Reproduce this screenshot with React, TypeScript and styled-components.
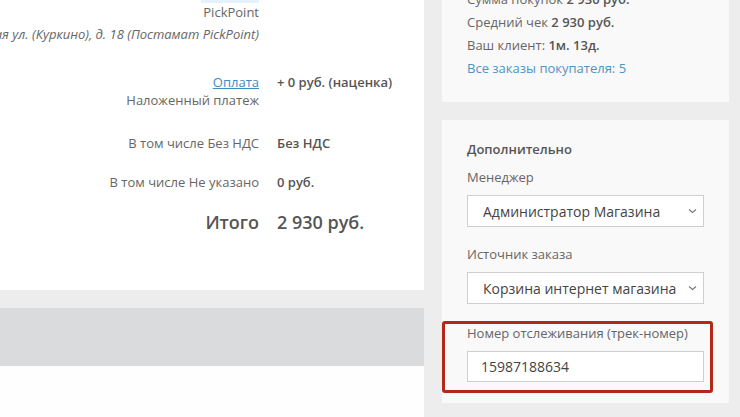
import React from "react";
import styled, { createGlobalStyle } from "styled-components";

const Global = createGlobalStyle`
  html, body { margin: 0; padding: 0; }
  body {
    width: 740px;
    height: 417px;
    overflow: hidden;
    background: #ededed;
    font-family: "Open Sans", "Noto Sans", sans-serif;
    font-size: 13px;
    color: #666;
  }
`;

const Page = styled.div`
  display: flex;
  width: 740px;
  height: 457px;
  margin-top: -40px;
`;

const LeftColumn = styled.div`
  width: 424px;
  display: flex;
  flex-direction: column;
  overflow: hidden;
`;

const OrderPanel = styled.div`
  background: #fff;
  padding: 19px 0 56px;
  display: flex;
  flex-direction: column;
`;

const Row = styled.div<{ $gap?: number }>`
  display: grid;
  grid-template-columns: 259px 1fr;
  column-gap: 18px;
  align-items: start;
  margin-top: ${(p) => p.$gap ?? 0}px;
  line-height: 18px;
`;

const LabelCell = styled.div`
  display: flex;
  flex-direction: column;
  align-items: flex-end;
  white-space: nowrap;
  min-width: 0;
`;

const Label = styled.span<{ $big?: boolean }>`
  color: ${(p) => (p.$big ? "#555" : "#666")};
  font-size: ${(p) => (p.$big ? "18px" : "13px")};
  font-weight: ${(p) => (p.$big ? 600 : 400)};
  line-height: ${(p) => (p.$big ? "24px" : "18px")};
`;

const Address = styled.span`
  margin-top: 4px;
  font-style: italic;
  color: #666;
`;

const LinkLabel = styled.a<{ $hl?: boolean }>`
  color: #3d8bc4;
  text-decoration: underline;
  background: ${(p) => (p.$hl ? "#e4f2fb" : "transparent")};
  padding-bottom: ${(p) => (p.$hl ? 6 : 0)}px;
  line-height: 18px;
`;

const Value = styled.span<{ $big?: boolean }>`
  color: #555;
  font-weight: 600;
  font-size: ${(p) => (p.$big ? "18px" : "13px")};
  line-height: ${(p) => (p.$big ? "24px" : "18px")};
  white-space: nowrap;
`;

const Spacer = styled.div`
  height: 18px;
  background: #ededed;
`;

const Band = styled.div`
  height: 58px;
  background: #dadbdd;
`;

const Blank = styled.div`
  flex: 1;
  background: #fefefe;
`;

const RightColumn = styled.div`
  flex: 1;
  background: #ededed;
  padding: 0 11px 0 18px;
  display: flex;
  flex-direction: column;
  gap: 18px;
`;

const Card = styled.div`
  background: #f9f9f9;
  padding: 28px 25px 22px;
  display: flex;
  flex-direction: column;
`;

const CardLine = styled.div`
  line-height: 23px;
  color: #666;
  b { color: #555; font-weight: 600; }
`;

const BlueLink = styled.a`
  line-height: 23px;
  color: #4b95c9;
  text-decoration: none;
`;

const ExtraCard = styled(Card)`
  padding: 18px 25px 21px;
`;

const Heading = styled.div`
  font-weight: 600;
  color: #555;
  line-height: 23px;
`;

const FieldLabel = styled.div<{ $top: number }>`
  margin-top: ${(p) => p.$top}px;
  line-height: 23px;
  color: #666;
`;

const SelectBox = styled.div`
  margin-top: 6px;
  height: 30px;
  border: 1px solid #cfcfcf;
  background: #fff;
  display: flex;
  align-items: center;
  padding: 0 6px 0 15px;
  font-size: 14px;
  color: #444;
  white-space: nowrap;
  overflow: hidden;
`;

const SelectText = styled.span`
  flex: 1;
  overflow: hidden;
`;

const Group = styled.div`
  position: relative;
  margin-top: 18px;
`;

const Highlight = styled.div`
  position: absolute;
  left: -25px;
  right: -9px;
  top: -1px;
  bottom: -11px;
  border: 3px solid #b5261b;
  border-radius: 3px;
  pointer-events: none;
`;

const TextInput = styled.div`
  margin-top: 6px;
  height: 29px;
  border: 1px solid #cfcfcf;
  background: #fff;
  display: flex;
  align-items: center;
  padding: 0 13px;
  font-size: 14px;
  color: #444;
`;

const Chevron = () => (
  <svg width="9" height="6" viewBox="0 0 9 6" fill="none">
    <polyline points="1,1.5 4.5,4.5 8,1.5" stroke="#777" strokeWidth="1.1" />
  </svg>
);

export default function App() {
  return (
    <>
      <Global />
      <Page>
        <LeftColumn>
          <OrderPanel>
            <Row>
              <LabelCell>
                <LinkLabel $hl>Доставка</LinkLabel>
                <Label>PickPoint</Label>
                <Address>г. Москва, Родионовская ул. (Куркино), д. 18 (Постамат PickPoint)</Address>
              </LabelCell>
              <Value>+ 0 руб. (доставка)</Value>
            </Row>
            <Row $gap={30}>
              <LabelCell>
                <LinkLabel>Оплата</LinkLabel>
                <Label>Наложенный платеж</Label>
              </LabelCell>
              <Value>+ 0 руб. (наценка)</Value>
            </Row>
            <Row $gap={25}>
              <LabelCell>
                <Label>В том числе Без НДС</Label>
              </LabelCell>
              <Value>Без НДС</Value>
            </Row>
            <Row $gap={21}>
              <LabelCell>
                <Label>В том числе Не указано</Label>
              </LabelCell>
              <Value>0 руб.</Value>
            </Row>
            <Row $gap={19}>
              <LabelCell>
                <Label $big>Итого</Label>
              </LabelCell>
              <Value $big>2 930 руб.</Value>
            </Row>
          </OrderPanel>
          <Spacer />
          <Band />
          <Blank />
        </LeftColumn>
        <RightColumn>
          <Card>
            <CardLine>
              Сумма покупок <b>2 930 руб.</b>
            </CardLine>
            <CardLine>
              Средний чек <b>2 930 руб.</b>
            </CardLine>
            <CardLine>
              Ваш клиент: <b>1м. 13д.</b>
            </CardLine>
            <BlueLink>Все заказы покупателя: 5</BlueLink>
          </Card>
          <ExtraCard>
            <Heading>Дополнительно</Heading>
            <FieldLabel $top={5}>Менеджер</FieldLabel>
            <SelectBox>
              <SelectText>Администратор Магазина</SelectText>
              <Chevron />
            </SelectBox>
            <FieldLabel $top={16}>Источник заказа</FieldLabel>
            <SelectBox>
              <SelectText>Корзина интернет магазина</SelectText>
              <Chevron />
            </SelectBox>
            <Group>
              <Highlight />
              <FieldLabel $top={0}>Номер отслеживания (трек-номер)</FieldLabel>
              <TextInput>15987188634</TextInput>
            </Group>
          </ExtraCard>
        </RightColumn>
      </Page>
    </>
  );
}
